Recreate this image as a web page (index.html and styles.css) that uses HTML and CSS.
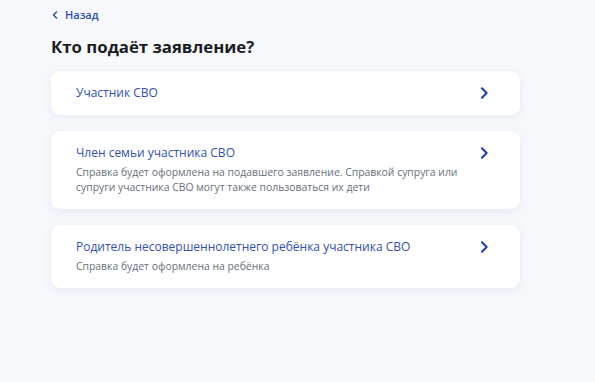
FILE: index.html
```html
<!DOCTYPE html>
<html lang="ru">
<head>
<meta charset="utf-8">
<link rel="stylesheet" href="styles.css">
</head>
<body>
<main class="page">
  <a class="back" href="#"><svg class="back-icon" viewBox="0 0 8 10" width="6" height="8"><path d="M6 1 L2 5 L6 9" fill="none" stroke="#2f4fb0" stroke-width="2" stroke-linecap="round" stroke-linejoin="round"/></svg><span>Назад</span></a>
  <h1 class="title">Кто подаёт заявление?</h1>
  <div class="list">
    <a class="card" href="#">
      <div class="card-text">
        <div class="card-title">Участник СВО</div>
      </div>
      <svg class="chev" viewBox="0 0 10 14" width="9" height="12"><path d="M2 1.5 L7.5 7 L2 12.5" fill="none" stroke="#1e40a8" stroke-width="2.4" stroke-linecap="round" stroke-linejoin="round"/></svg>
    </a>
    <a class="card" href="#">
      <div class="card-text">
        <div class="card-title">Член семьи участника СВО</div>
        <div class="card-desc">Справка будет оформлена на подавшего заявление. Справкой супруга или супруги участника СВО могут также пользоваться их дети</div>
      </div>
      <svg class="chev" viewBox="0 0 10 14" width="9" height="12"><path d="M2 1.5 L7.5 7 L2 12.5" fill="none" stroke="#1e40a8" stroke-width="2.4" stroke-linecap="round" stroke-linejoin="round"/></svg>
    </a>
    <a class="card" href="#">
      <div class="card-text">
        <div class="card-title">Родитель несовершеннолетнего ребёнка участника СВО</div>
        <div class="card-desc">Справка будет оформлена на ребёнка</div>
      </div>
      <svg class="chev" viewBox="0 0 10 14" width="9" height="12"><path d="M2 1.5 L7.5 7 L2 12.5" fill="none" stroke="#1e40a8" stroke-width="2.4" stroke-linecap="round" stroke-linejoin="round"/></svg>
    </a>
  </div>
</main>
</body>
</html>
```
FILE: styles.css
```css
html, body {
  margin: 0;
  padding: 0;
}
body {
  background: #f6f8fc;
  font-family: "Open Sans", "Noto Sans", sans-serif;
  width: 595px;
  height: 382px;
  overflow: hidden;
}
.page {
  padding: 7px 0 0 51px;
  width: 469px;
}
.back {
  display: flex;
  align-items: center;
  gap: 7px;
  color: #2f4fb0;
  text-decoration: none;
  font-size: 11px;
  font-weight: 600;
  line-height: 16px;
  padding-left: 1px;
}
.back-icon {
  display: block;
}
.title {
  margin: 13px 0 13px;
  font-size: 16.8px;
  line-height: 22px;
  font-weight: 700;
  color: #1b1d22;
}
.list {
  display: flex;
  flex-direction: column;
  gap: 16px;
}
.card {
  display: flex;
  justify-content: space-between;
  align-items: flex-start;
  background: #fff;
  border-radius: 9px;
  box-shadow: 0 2px 8px rgba(100, 120, 170, 0.12);
  padding: 14px 31px 14px 25px;
  text-decoration: none;
}
.card-text {
  width: 395px;
}
.card-title {
  color: #3050b0;
  font-size: 12px;
  font-weight: 500;
  line-height: 16px;
}
.card-desc {
  margin-top: 4px;
  color: #66707c;
  font-size: 10.4px;
  line-height: 15px;
}
.chev {
  display: block;
  margin-top: 2px;
}
```
